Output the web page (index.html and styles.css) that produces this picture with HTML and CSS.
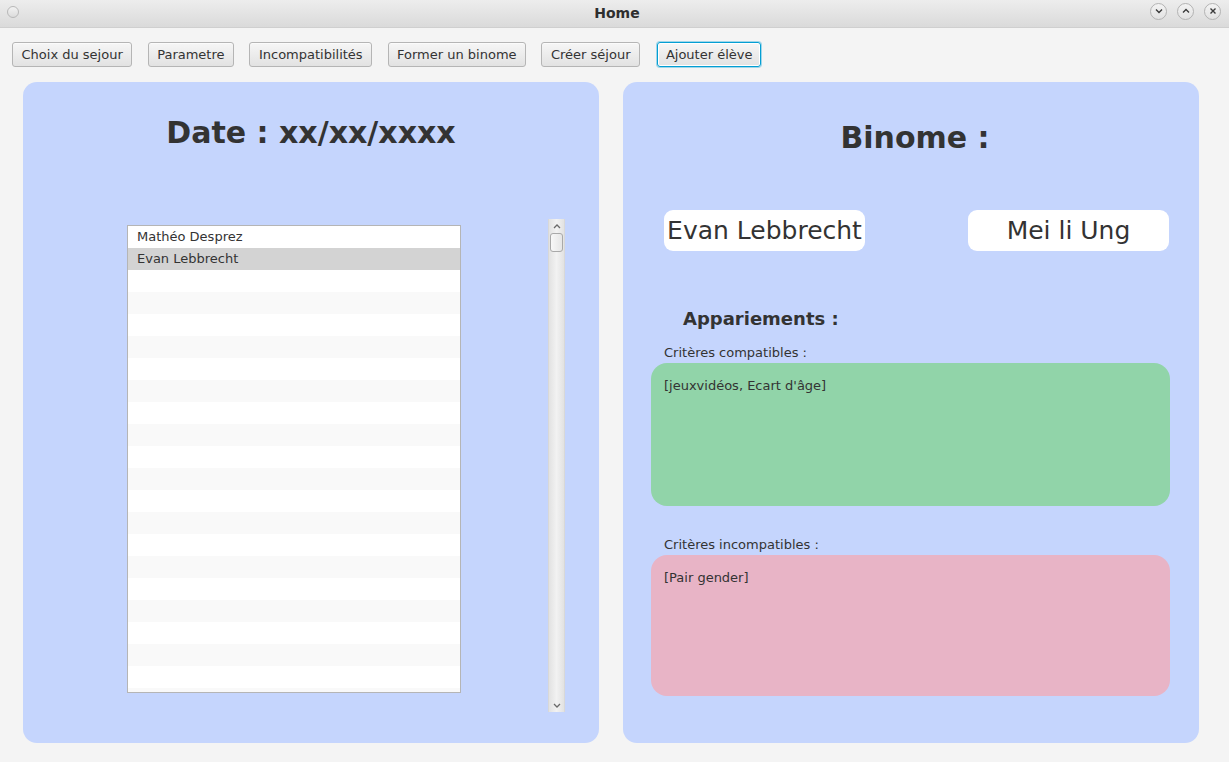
FILE: index.html
```html
<!DOCTYPE html>
<html lang="fr">
<head>
<meta charset="utf-8">
<title>Home</title>
<link rel="stylesheet" href="styles.css">
</head>
<body>
<div class="window">
  <header class="titlebar">
    <div class="tb-left"><span class="tb-dot"></span></div>
    <div class="tb-title">Home</div>
    <div class="tb-controls">
      <span class="tb-btn"><svg width="8" height="6" viewBox="0 0 8 6"><path d="M1 1.5 L4 4.5 L7 1.5" fill="none" stroke="#3a3a3a" stroke-width="1.4"/></svg></span>
      <span class="tb-btn"><svg width="8" height="6" viewBox="0 0 8 6"><path d="M1 4.5 L4 1.5 L7 4.5" fill="none" stroke="#3a3a3a" stroke-width="1.4"/></svg></span>
      <span class="tb-btn"><svg width="8" height="8" viewBox="0 0 8 8"><path d="M1.5 1.5 L6.5 6.5 M6.5 1.5 L1.5 6.5" fill="none" stroke="#3a3a3a" stroke-width="1.4"/></svg></span>
    </div>
  </header>

  <nav class="toolbar">
    <button class="btn">Choix du sejour</button>
    <button class="btn">Parametre</button>
    <button class="btn">Incompatibilités</button>
    <button class="btn">Former un binome</button>
    <button class="btn">Créer séjour</button>
    <button class="btn btn-focus">Ajouter élève</button>
  </nav>

  <main class="content">
    <section class="panel panel-left">
      <h1 class="panel-title date-title">Date : xx/xx/xxxx</h1>
      <div class="list-row">
        <ul class="listview">
          <li>Mathéo Desprez</li>
          <li class="selected">Evan Lebbrecht</li>
          <li></li><li></li><li></li><li></li><li></li><li></li><li></li><li></li>
          <li></li><li></li><li></li><li></li><li></li><li></li><li></li><li></li>
          <li></li><li></li><li></li><li></li>
        </ul>
        <div class="scrollbar">
          <div class="sb-arrow"><svg width="8" height="5" viewBox="0 0 8 5"><path d="M1 4 L4 1 L7 4" fill="none" stroke="#6a6a6a" stroke-width="1.3"/></svg></div>
          <div class="sb-thumb"></div>
          <div class="sb-track"></div>
          <div class="sb-arrow"><svg width="8" height="5" viewBox="0 0 8 5"><path d="M1 1 L4 4 L7 1" fill="none" stroke="#6a6a6a" stroke-width="1.3"/></svg></div>
        </div>
      </div>
    </section>

    <section class="panel panel-right">
      <h1 class="panel-title binome-title">Binome :</h1>
      <div class="names">
        <div class="name-box">Evan Lebbrecht</div>
        <div class="name-box">Mei li Ung</div>
      </div>
      <h2 class="sub-title">Appariements :</h2>
      <div class="crit-label">Critères compatibles :</div>
      <div class="crit-box crit-ok">[jeuxvidéos, Ecart d'âge]</div>
      <div class="crit-label crit-label-2">Critères incompatibles :</div>
      <div class="crit-box crit-ko">[Pair gender]</div>
    </section>
  </main>
</div>
</body>
</html>
```

FILE: styles.css
```css
* { box-sizing: border-box; }

html, body {
  margin: 0;
  padding: 0;
  background: #f4f4f4;
  font-family: "DejaVu Sans", sans-serif;
  color: #333333;
}

.window {
  width: 1229px;
  height: 762px;
  overflow: hidden;
  background: #f4f4f4;
}

/* Title bar */
.titlebar {
  height: 28px;
  display: grid;
  grid-template-columns: 1fr auto 1fr;
  align-items: center;
  background: linear-gradient(#ededed, #dadada);
  border-bottom: 1px solid #cfcfcf;
}

.tb-left {
  padding-left: 7px;
  display: flex;
  align-items: center;
  margin-top: -4px;
}

.tb-dot {
  width: 12px;
  height: 12px;
  border-radius: 50%;
  border: 1px solid #b8b8b8;
  background: linear-gradient(#f2f2f2, #dcdcdc);
}

.tb-title {
  font-weight: bold;
  font-size: 14px;
  color: #2e2e2e;
  padding-left: 5px;
  margin-top: -2px;
}

.tb-controls {
  display: flex;
  justify-content: flex-end;
  gap: 10px;
  padding-right: 8px;
  margin-top: -5px;
}

.tb-btn {
  width: 17px;
  height: 17px;
  border-radius: 50%;
  border: 1px solid #b3b3b3;
  background: linear-gradient(#f3f3f3, #e2e2e2);
  display: flex;
  align-items: center;
  justify-content: center;
}

/* Toolbar */
.toolbar {
  display: flex;
  gap: 15.4px;
  padding: 14px 0 0 12px;
  height: 54px;
}

.btn {
  font-family: "DejaVu Sans", sans-serif;
  font-size: 13px;
  color: #333333;
  height: 25px;
  padding: 0 8.5px;
  border: 1px solid #b5b5b5;
  border-radius: 3px;
  background: linear-gradient(#f6f6f6, #e2e2e2);
  box-shadow: inset 0 1px 0 #fbfbfb;
  cursor: default;
}

.btn-focus {
  margin-left: 2px;
  padding: 0 7.5px;
  border-color: #039ed3;
  box-shadow: inset 0 0 0 1px #ffffff, 0 0 0 1px rgba(3, 158, 211, 0.35);
}

/* Content */
.content {
  display: flex;
  gap: 24px;
  padding: 0 0 0 23px;
}

.panel {
  width: 576px;
  height: 661px;
  background: #c5d5fd;
  border-radius: 14px;
}

.panel-title {
  margin: 0;
  font-weight: bold;
  text-align: center;
  color: #333333;
  line-height: 34px;
}

.date-title {
  font-size: 30px;
  padding-top: 34px;
}

/* list */
.list-row {
  display: flex;
  align-items: flex-start;
  margin-top: 69px;
  padding-left: 104px;
  gap: 87px;
}

.listview {
  list-style: none;
  margin: 6px 0 0 0;
  padding: 0;
  width: 334px;
  height: 468px;
  overflow: hidden;
  background: #ffffff;
  border: 1px solid #b5b5b5;
}

.listview li {
  height: 22px;
  line-height: 22px;
  padding-left: 9px;
  font-size: 13px;
  color: #333333;
  background: #ffffff;
}

.listview li:nth-child(even) {
  background: #f9f9f9;
}

.listview li.selected {
  background: #d3d3d3;
}

.scrollbar {
  width: 17px;
  height: 493px;
  display: flex;
  flex-direction: column;
  background: linear-gradient(to right, #e2e2e2, #f2f2f2 50%, #e2e2e2);
  border-left: 1px solid #d8d8d8;
  border-right: 1px solid #d8d8d8;
}

.sb-arrow {
  height: 14px;
  display: flex;
  align-items: center;
  justify-content: center;
}

.sb-thumb {
  height: 19px;
  margin: 0 1px;
  border: 1px solid #a9a9a9;
  border-radius: 3px;
  background: linear-gradient(to right, #f8f8f8, #e6e6e6);
}

.sb-track {
  flex: 1;
}

/* Right panel */
.panel-right {
  padding: 0 30px 0 28px;
}

.binome-title {
  font-size: 30px;
  padding-top: 38px;
  padding-left: 10px;
  line-height: 36px;
}

.names {
  display: flex;
  justify-content: space-between;
  margin-top: 54px;
  padding-left: 13px;
}

.name-box {
  width: 201px;
  height: 41px;
  background: #ffffff;
  border-radius: 9px;
  font-size: 25px;
  line-height: 41px;
  text-align: center;
  color: #333333;
}

.sub-title {
  margin: 57px 0 0 32px;
  font-size: 18px;
  font-weight: bold;
  line-height: 22px;
  color: #333333;
}

.crit-label {
  font-size: 13px;
  line-height: 16px;
  margin: 15px 0 0 13px;
  color: #333333;
}

.crit-label-2 {
  margin-top: 31px;
}

.crit-box {
  margin-top: 2px;
  width: 519px;
  height: 143px;
  border-radius: 16px;
  padding: 15px 13px;
  font-size: 13px;
  line-height: 16px;
  color: #333333;
}

.crit-ok {
  background: #91d4a9;
}

.crit-ko {
  margin-top: 2px;
  height: 141px;
  background: #e8b4c6;
}
```
